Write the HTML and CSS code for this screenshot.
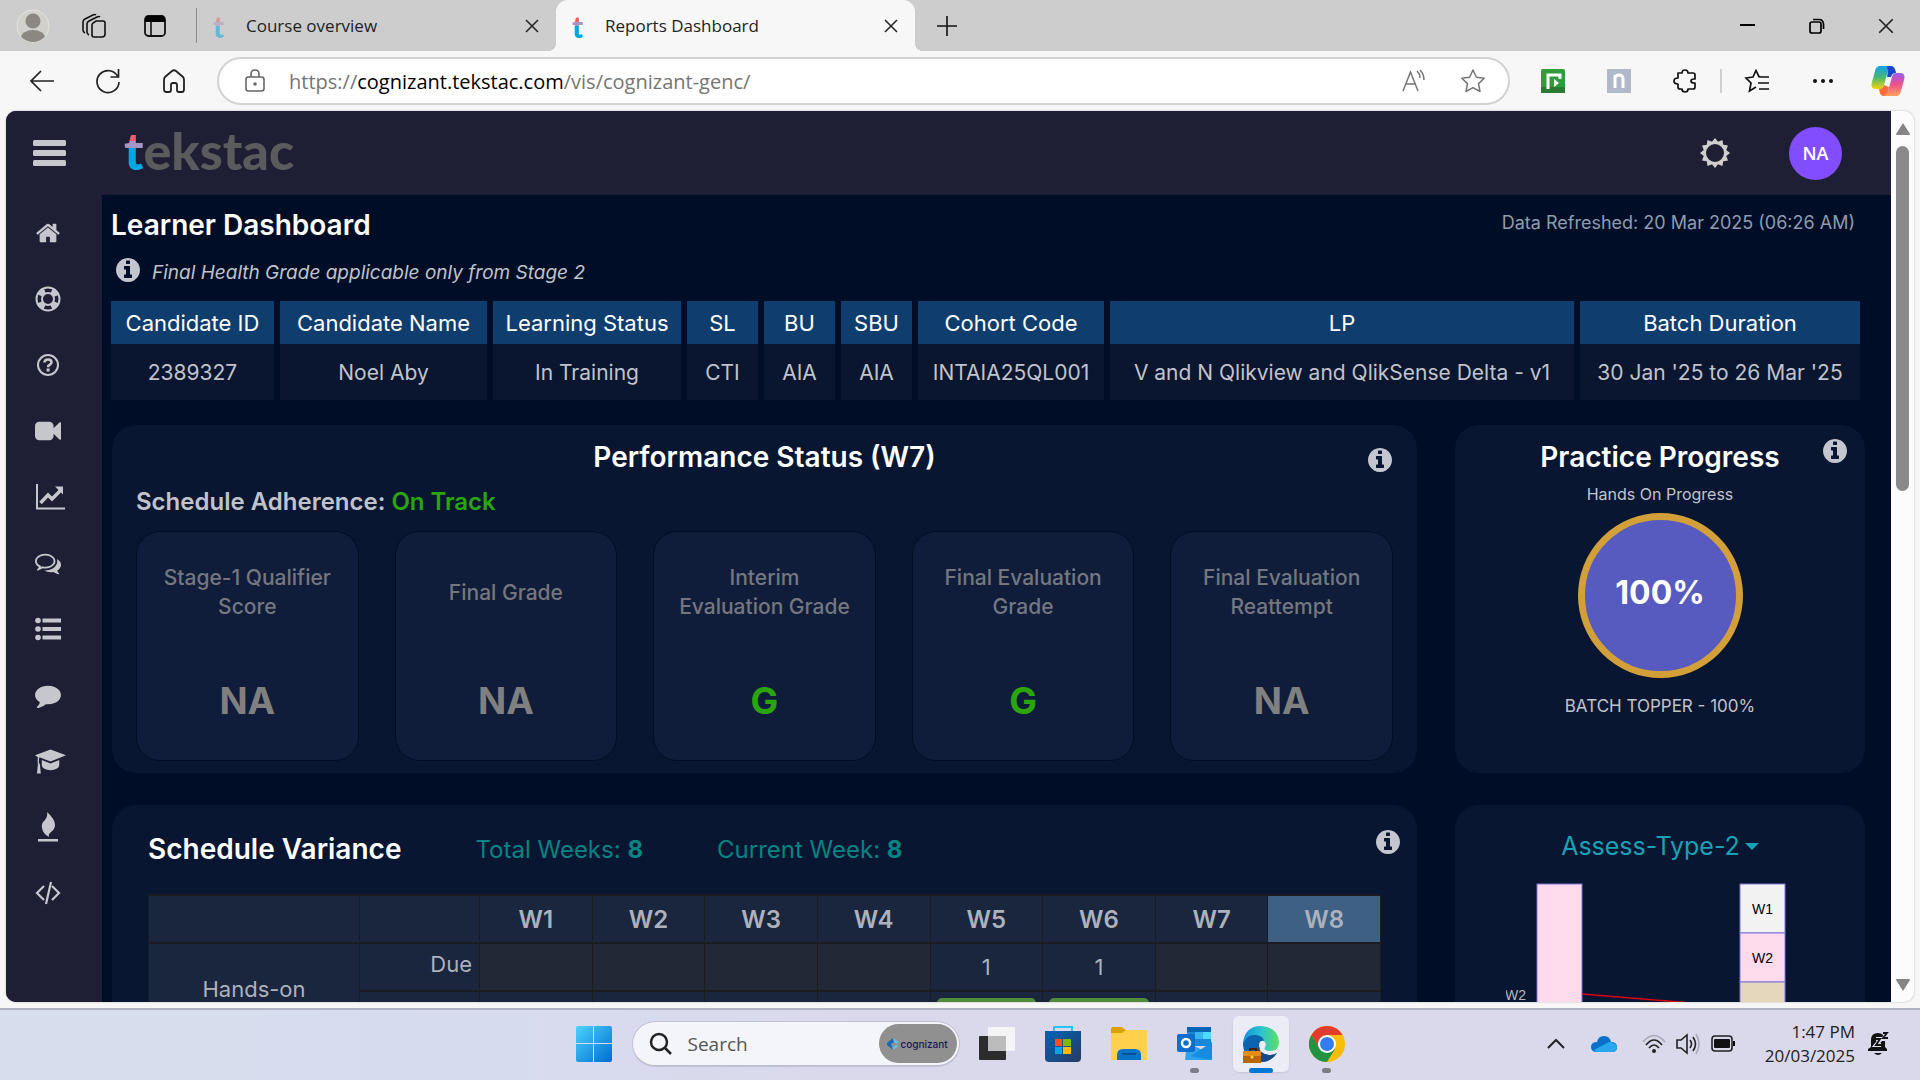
FILE: index.html
```html
<!DOCTYPE html>
<html lang="en">
<head>
<meta charset="utf-8">
<title>Reports Dashboard</title>
<link rel="stylesheet" href="styles.css">
</head>
<body>
<svg class="sprite" aria-hidden="true">
  <symbol id="close" viewBox="0 0 16 16"><path d="M2 2l12 12M14 2L2 14" fill="none" stroke="currentColor" stroke-width="1.5"/></symbol>
  <symbol id="info" viewBox="128 128 1536 1536"><path d="M1152 1376v-160q0-14-9-23t-23-9h-96v-512q0-14-9-23t-23-9h-320q-14 0-23 9t-9 23v160q0 14 9 23t23 9h96v320h-96q-14 0-23 9t-9 23v160q0 14 9 23t23 9h448q14 0 23-9t9-23zm-128-896v-160q0-14-9-23t-23-9h-192q-14 0-23 9t-9 23v160q0 14 9 23t23 9h192q14 0 23-9t9-23zm640 416q0 209-103 385.5t-279.5 279.5-385.5 103-385.5-103-279.5-279.5-103-385.5 103-385.5 279.5-279.5 385.5-103 385.5 103 279.5 279.5 103 385.5z" fill="currentColor"/></symbol>
</svg>

<header class="tabstrip">
  <div class="strip-tools">
    <button class="icon-btn" aria-label="Profile"><svg width="34" height="34" viewBox="0 0 34 34"><defs><clipPath id="av"><circle cx="17" cy="17" r="16"/></clipPath></defs><circle cx="17" cy="17" r="16" fill="#d2d0cb" stroke="#e6e4de"/><g clip-path="url(#av)" fill="#8b8883"><circle cx="17" cy="12" r="7.500"/><ellipse cx="17" cy="29" rx="12" ry="8"/></g></svg></button>
    <button class="icon-btn" aria-label="Workspaces"><svg width="26" height="26" viewBox="0 0 26 26" fill="none" stroke="#111" stroke-width="1.600"><path d="M4 20q-2-1-2-3V9q0-2 2-3l8-4q2-1 3 0M8 22q-2-1-2-3v-8q0-2 2-3l8-4q2-1 3 0"/><path d="M11 12q0-1 1-2l3-2h7q2 0 2 2v11q0 3-3 3h-8q-2 0-2-2z"/></svg></button>
    <button class="icon-btn" aria-label="Tab actions"><svg width="24" height="24" viewBox="0 0 24 24"><rect x="2" y="2" width="20" height="20" rx="3.500" fill="none" stroke="#111" stroke-width="1.800"/><path d="M2 8V5q0-3 3-3h14q3 0 3 3v3z" fill="#000"/><path d="M8 8v14" stroke="#111" stroke-width="1.600"/></svg></button>
  </div>
  <div class="tab">
    <span class="favicon faded">t</span><span class="tab-title">Course overview</span>
    <button class="icon-btn" aria-label="Close Course overview"><svg width="16" height="16"><use href="#close"/></svg></button>
  </div>
  <div class="tab active">
    <span class="favicon">t</span><span class="tab-title">Reports Dashboard</span>
    <button class="icon-btn" aria-label="Close Reports Dashboard"><svg width="16" height="16"><use href="#close"/></svg></button>
  </div>
  <button class="icon-btn new-tab" aria-label="New tab"><svg width="22" height="22" viewBox="0 0 22 22"><path d="M11 1v20M1 11h20" stroke="#111" stroke-width="1.600"/></svg></button>
  <div class="window-tools">
    <button class="icon-btn" aria-label="Minimize"><svg width="16" height="16"><path d="M0 7h15" stroke="#000" stroke-width="2"/></svg></button>
    <button class="icon-btn" aria-label="Restore"><svg width="16" height="16" viewBox="0 0 16 16" fill="none" stroke="#000" stroke-width="1.700"><rect x="1" y="4" width="11" height="11" rx="2"/><path d="M4 1.500h6q4 0 4.500 4.500v5"/></svg></button>
    <button class="icon-btn" aria-label="Close window"><svg width="18" height="18"><use href="#close"/></svg></button>
  </div>
</header>

<div class="toolbar">
  <div class="nav-tools">
    <button class="icon-btn" aria-label="Back"><svg width="26" height="24" viewBox="0 0 26 24" fill="none" stroke="#222" stroke-width="1.700"><path d="M25 12H2M12 2L2 12l10 10"/></svg></button>
    <button class="icon-btn" aria-label="Refresh"><svg width="26" height="26" viewBox="0 0 26 26" fill="none" stroke="#222" stroke-width="1.700"><path d="M23 9A11 11 0 1 0 24 14M23.500 1v8h-8"/></svg></button>
    <button class="icon-btn" aria-label="Home"><svg width="24" height="24" viewBox="0 0 24 24" fill="none" stroke="#222" stroke-width="1.800"><path d="M2 11q0-2 1-3l7-6q2-1.500 4 0l7 6q1 1 1 3v9q0 3-2 3h-3q-2 0-2-2v-5q0-2-2-2h-2q-2 0-2 2v5q0 2-2 2H4q-2 0-2-3z"/></svg></button>
  </div>
  <form class="address">
    <svg width="20" height="24" viewBox="0 0 20 24" fill="none" stroke="#666" stroke-width="1.600"><rect x="1" y="8" width="18" height="14" rx="2.500"/><path d="M6 8V5q0-4 4-4t4 4v3"/><circle cx="10" cy="15" r="1" fill="#666"/></svg>
    <div class="url"><span>https://</span><b>cognizant.tekstac.com</b><span>/vis/cognizant-genc/</span></div>
    <button type="button" class="icon-btn" aria-label="Read aloud"><svg width="24" height="24" viewBox="0 0 24 24" fill="none" stroke="#757575" stroke-width="1.500"><path d="M1 22L8.500 3 16 22M4 15h9M15 2q3 3 3 7M18 1q4 4 4 10"/></svg></button>
    <button type="button" class="icon-btn" aria-label="Add to favorites"><svg width="26" height="26" viewBox="0 0 26 26" fill="none" stroke="#757575" stroke-width="1.500" stroke-linejoin="round"><path d="M13 2l3.400 7.200 7.800 1-5.700 5.400 1.500 7.900L13 19.600 6 23.500l1.500-7.900L1.800 10.200l7.800-1z"/></svg></button>
  </form>
  <div class="extensions">
    <button class="icon-btn" aria-label="Screen recorder"><svg width="24" height="24" viewBox="0 0 24 24"><rect width="24" height="24" rx="2" fill="#349a3e"/><path d="M0 18h24v6H0z" fill="#287b31"/><path d="M7 20V6h12v4" fill="none" stroke="#fff" stroke-width="3"/><path d="M13 10l5 4-5 4z" fill="#fff"/></svg></button>
    <button class="icon-btn" aria-label="Notes"><svg width="24" height="24" viewBox="0 0 24 24"><path fill="#b0b8c9" d="M0 0h24v24H0z"/><path d="M8 19V6M8 9q1-3 4-3 4 0 4 4v9" fill="none" stroke="#fff" stroke-width="3"/></svg></button>
    <button class="icon-btn" aria-label="Extensions"><svg width="24" height="24" viewBox="0 0 24 24" fill="none" stroke="#111" stroke-width="1.700" stroke-linejoin="round"><path d="M5 4h4q0-3 3-3t3 3h5q2 0 2 2v4h-1q-3 0-3 2t3 2h1v4q0 2-2 2h-5q0 3-3 3t-3-3H7q-2 0-2-2v-3q-4 0-4-3t4-3z"/></svg></button>
    <i class="divider"></i>
    <button class="icon-btn" aria-label="Favorites"><svg width="26" height="24" viewBox="0 0 26 24" fill="none" stroke="#111" stroke-width="1.700"><path d="M17 8l-2-.3L12 1.500 9 8l-7 1 5 5-1.500 8L12 18M17 8h8M14 14h11M15 20h10"/></svg></button>
    <button class="icon-btn" aria-label="More"><svg width="22" height="6"><g fill="#111"><circle cx="3" cy="3" r="2"/><circle cx="11" cy="3" r="2"/><circle cx="19" cy="3" r="2"/></g></svg></button>
    <button class="icon-btn copilot" aria-label="Copilot"><svg width="34" height="32" viewBox="0 0 34 32"><defs><linearGradient id="cp1" x2="0" y2="1"><stop stop-color="#13a0ed"/><stop offset=".5" stop-color="#48b970"/><stop offset="1" stop-color="#f5d40a"/></linearGradient><linearGradient id="cp2" x2="0" y2="1"><stop stop-color="#9a59ef"/><stop offset=".5" stop-color="#f0508e"/><stop offset="1" stop-color="#ffa45a"/></linearGradient></defs><path d="M9 1h13q-4 1-5 5l-4 14q-1 4-5 4H5q-6 0-4-7L4 6q1-5 5-5z" fill="url(#cp1)"/><path d="M25 31H12q4-1 5-5l4-14q1-4 5-4h3q6 0 4 7l-3 11q-1 5-5 5z" fill="url(#cp2)"/><path d="M16 1h4q4 0 5 7-4 0-5 4h-4l1-6z" fill="#1748ca"/><path d="M18 22l-1 4q-1 5-5 5-3 0-4-7 4 0 5-4z" fill="#fa6e3d"/></svg></button>
  </div>
</div>

<div class="viewport">
  <div class="app">
    <header class="app-bar">
      <button class="icon-btn menu" aria-label="Menu"><svg width="34" height="28" viewBox="0 0 34 28" fill="#c6c7cc"><rect y="1" width="33" height="6" rx="1.500"/><rect y="11" width="33" height="6" rx="1.500"/><rect y="21" width="33" height="6" rx="1.500"/></svg></button>
      <a href="#" class="logo"><span>t</span>ekstac</a>
      <button class="icon-btn theme" aria-label="Theme"><svg width="32" height="32" viewBox="-16 -16 32 32"><g fill="#d0cfcb"><path d="M0-15l4 5h-8zM0 15l4-5h-8zM-15 0l5-4v8zM15 0l-5-4v8z"/><path d="M0-15l4 5h-8zM0 15l4-5h-8zM-15 0l5-4v8zM15 0l-5-4v8z" transform="rotate(30)"/><path d="M0-15l4 5h-8zM0 15l4-5h-8zM-15 0l5-4v8zM15 0l-5-4v8z" transform="rotate(60)"/></g><circle r="10" fill="#1e1f34" stroke="#d0cfcb" stroke-width="2"/></svg></button>
      <button class="user">NA</button>
    </header>
    <nav class="side">
      <a href="#" aria-label="Home"><svg viewBox="0 0 1792 1792"><path d="M1472 992v480q0 26-19 45t-45 19h-384v-384h-256v384h-384q-26 0-45-19t-19-45v-480q0-1 .5-3t.5-3l575-474 575 474q1 2 1 6zm223-69l-62 74q-8 9-21 11h-3q-13 0-21-7l-692-577-692 577q-12 8-24 7-13-2-21-11l-62-74q-8-10-7-23.500t11-21.500l719-599q32-26 76-26t76 26l244 204v-195q0-14 9-23t23-9h192q14 0 23 9t9 23v408l219 182q10 8 11 21.500t-7 23.500z"/></svg></a>
      <a href="#" aria-label="Support"><svg viewBox="0 0 26 26" fill="none"><circle cx="13" cy="13" r="11.500" fill="none" stroke="currentColor" stroke-width="2"/><circle cx="13" cy="13" r="6" fill="none" stroke="currentColor" stroke-width="2"/><circle cx="13" cy="13" r="9" fill="none" stroke="currentColor" stroke-width="6" stroke-dasharray="7.070 7.070" stroke-dashoffset="-3.500"/></svg></a>
      <a href="#" aria-label="Help"><svg viewBox="0 0 26 26"><circle cx="13" cy="13" r="10" fill="none" stroke="currentColor" stroke-width="2"/><path d="M9.500 10.500q0-3 3.500-3t3.500 2.800q0 1.700-2 2.700-1.500.7-1.500 2.200" fill="none" stroke="currentColor" stroke-width="2.600"/><rect x="11.600" y="16.500" width="3" height="3"/></svg></a>
      <a href="#" aria-label="Videos"><svg viewBox="0 0 1792 1792"><path d="M1792 352v1088q0 42-39 59-13 5-25 5-27 0-45-19l-403-403v166q0 119-84.500 203.500t-203.500 84.500h-704q-119 0-203.500-84.500t-84.500-203.500v-704q0-119 84.500-203.500t203.500-84.500h704q119 0 203.500 84.500t84.500 203.500v165l403-402q18-19 45-19 12 0 25 5 39 17 39 59z"/></svg></a>
      <a href="#" aria-label="Reports"><svg class="wide" viewBox="0 0 29 26"><path d="M1 0v24.500h28" fill="none" stroke="currentColor" stroke-width="2"/><path d="M4.500 19l7.500-8 4 4 8.500-8.500" fill="none" stroke="currentColor" stroke-width="3.400"/><path d="M19 2.500h8v8z"/></svg></a>
      <a href="#" aria-label="Discussions"><svg viewBox="0 0 1792 1792"><path d="M704 384q-153 0-286 52t-211.500 141-78.500 191q0 82 53 158t149 132l97 56-35 84q34-20 62-39l44-31 53 10q78 14 153 14 153 0 286-52t211.500-141 78.500-191-78.500-191-211.500-141-286-52zm0-128q191 0 353.500 68.500t256.500 186.500 94 257-94 257-256.500 186.500-353.500 68.500q-86 0-176-16-124 88-278 128-36 9-86 16h-3q-11 0-20.500-8t-11.500-21q-1-3-1-6.500t.5-6.500 2-6l2.500-5 3.500-5.500 4-5 4.500-5 4-4.500q5-6 23-25t26-29.500 22.500-29 25-38.500 20.500-44q-124-72-195-177t-71-224q0-139 94-257t256.500-186.500 353.500-68.500zm822 1169q10 24 20.500 44t25 38.500 22.500 29 26 29.500 23 25q1 1 4 4.500t4.500 5 4 5 3.500 5.500l2.500 5 2 6 .5 6.500-1 6.500q-3 14-13 22t-22 7q-50-7-86-16-154-40-278-128-90 16-176 16-271 0-472-132 58 4 88 4 161 0 309-45t264-129q125-92 192-212t67-254q0-77-23-152 129 71 204 178t75 230q0 120-71 224.500t-195 176.500z"/></svg></a>
      <a href="#" aria-label="Lists"><svg viewBox="0 0 26 26"><circle cx="3" cy="4.500" r="2.800"/><circle cx="3" cy="13" r="2.800"/><circle cx="3" cy="21.500" r="2.800"/><path d="M7.500 2.500H26v4H7.500zM7.500 11H26v4H7.500zM7.500 19.500H26v4H7.500z"/></svg></a>
      <a href="#" aria-label="Messages"><svg viewBox="0 0 1792 1792"><path d="M1792 896q0 174-120 321.500t-326 233-450 85.500q-70 0-145-8-198 175-460 242-49 14-114 22-17 2-30.500-9t-17.500-29v-1q-3-4-.5-12t2-10 4.500-9.500l6-9 7-8.500 8-9q7-8 31-34.500t34.500-38 31-39.500 32.500-51 27-59 26-76q-157-89-247.500-220t-90.500-281q0-130 71-248.500t191-204.500 286-136.500 348-50.500q244 0 450 85.500t326 233 120 321.500z"/></svg></a>
      <a href="#" aria-label="Courses"><svg class="wide" viewBox="0 0 32 26"><path d="M16 1l16 6-16 6.500L4.500 9.200Q4 11 4 14.500l1 2L6 26H2l1-9.500Q2.500 13 3 9L0 7z"/><path d="M7 12l9 3.600 9-3.600v6q-1 4-9 4.500-8-.5-9-4.500z"/></svg></a>
      <a href="#" aria-label="Campfire"><svg class="tall" viewBox="0 0 26 30"><path d="M12 0q8 7 8 13 0 4-4 7-3 2.500-2 5-6-3-7-9-1-5 3-8 3-4 2-8zM3 27h20v2.500H3z"/></svg></a>
      <a href="#" aria-label="Code"><svg viewBox="0 0 26 24"><path d="M9 5L2 12l7 7M17 5l7 7-7 7M16 1l-5 22" fill="none" stroke="currentColor" stroke-width="2.200"/></svg></a>
    </nav>

    <main class="content">
      <div class="heading"><h1>Learner Dashboard</h1><p>Data Refreshed: 20 Mar 2025 (06:26 AM)</p></div>
      <p class="note"><svg class="info"><use href="#info"/></svg><em>Final Health Grade applicable only from Stage 2</em></p>
      <table class="candidate">
        <colgroup><col class="c-id"><col class="c-name"><col class="c-status"><col class="c-short"><col class="c-short"><col class="c-short"><col class="c-cohort"><col class="c-lp"><col class="c-batch"></colgroup>
        <thead><tr><th>Candidate ID</th><th>Candidate Name</th><th>Learning Status</th><th>SL</th><th>BU</th><th>SBU</th><th>Cohort Code</th><th>LP</th><th>Batch Duration</th></tr></thead>
        <tbody><tr><td>2389327</td><td>Noel Aby</td><td>In Training</td><td>CTI</td><td>AIA</td><td>AIA</td><td>INTAIA25QL001</td><td>V and N Qlikview and QlikSense Delta - v1</td><td>30 Jan '25 to 26 Mar '25</td></tr></tbody>
      </table>

      <div class="cards">
        <section class="card performance">
          <header class="card-head"><h2>Performance Status (W7)</h2><button class="icon-btn" aria-label="About performance"><svg class="info"><use href="#info"/></svg></button></header>
          <h3>Schedule Adherence: <span class="good">On Track</span></h3>
          <div class="tiles">
            <div class="tile"><p>Stage-1 Qualifier Score</p><strong>NA</strong></div>
            <div class="tile"><p>Final Grade</p><strong>NA</strong></div>
            <div class="tile"><p>Interim<br>Evaluation Grade</p><strong class="good">G</strong></div>
            <div class="tile"><p>Final Evaluation Grade</p><strong class="good">G</strong></div>
            <div class="tile"><p>Final Evaluation Reattempt</p><strong>NA</strong></div>
          </div>
        </section>

        <section class="card practice">
          <header class="card-head"><h2>Practice Progress</h2><button class="icon-btn" aria-label="About practice"><svg class="info"><use href="#info"/></svg></button></header>
          <p class="small">Hands On Progress</p>
          <div class="ring">100%</div>
          <p class="topper">BATCH TOPPER - 100%</p>
        </section>

        <section class="card variance">
          <header class="variance-head"><h2>Schedule Variance</h2><span>Total Weeks: <b>8</b></span><span>Current Week: <b>8</b></span><button class="icon-btn" aria-label="About variance"><svg class="info"><use href="#info"/></svg></button></header>
          <table class="weeks">
            <colgroup><col class="w-group"><col class="w-kind"><col span="8"></colgroup>
            <thead><tr><td></td><td></td><th>W1</th><th>W2</th><th>W3</th><th>W4</th><th>W5</th><th>W6</th><th>W7</th><th class="current">W8</th></tr></thead>
            <tbody>
              <tr><th rowspan="2" class="group">Hands-on</th><th class="kind">Due</th><td class="none"></td><td class="none"></td><td class="none"></td><td class="none"></td><td>1</td><td>1</td><td class="none"></td><td class="none"></td></tr>
              <tr><th class="kind"></th><td></td><td></td><td></td><td></td><td><i class="done"></i></td><td><i class="done"></i></td><td></td><td></td></tr>
            </tbody>
          </table>
        </section>

        <section class="card assess">
          <button class="assess-type">Assess-Type-2<i class="caret"></i></button>
          <svg class="chart" width="308" height="160" viewBox="0 0 308 160">
            <rect x="31" y="1" width="45" height="159" fill="#fddbec" stroke="#7d74d8"/>
            <rect x="234" y="1" width="45" height="49" fill="#f2f2f2" stroke="#7d74d8"/>
            <rect x="234" y="50" width="45" height="49" fill="#fddbec" stroke="#7d74d8"/>
            <rect x="234" y="99" width="45" height="61" fill="#e5d7bb" stroke="#7d74d8"/>
            <path d="M76 111l158 13" fill="none" stroke="#dd0010" stroke-width="1.500"/>
            <text x="-1" y="117" fill="#b3b7c0">W2</text>
            <text x="246" y="31">W1</text><text x="246" y="80">W2</text>
          </svg>
        </section>
      </div>
    </main>
  </div>
  <div class="scrollbar" aria-hidden="true">
    <svg width="16" height="14"><path d="M8 1L15 12Q15 13 14 13H2Q1 13 1 12z" fill="#858585"/></svg>
    <div class="track"><div class="thumb"></div></div>
    <svg width="16" height="14"><path d="M8 13L15 2Q15 1 14 1H2Q1 1 1 2z" fill="#858585"/></svg>
  </div>
</div>

<footer class="taskbar">
  <div class="dock">
    <button class="icon-btn start" aria-label="Start"><svg width="36" height="36" viewBox="0 0 36 36"><defs><linearGradient id="win" x2="1" y2="1"><stop stop-color="#4cd2ff"/><stop offset="1" stop-color="#006dce"/></linearGradient></defs><path fill="url(#win)" d="M2 0h15v17H0V2q0-2 2-2zM18 0h16q2 0 2 2v15H18zM0 18h17v18H2q-2 0-2-2zM18 18h18v16q0 2-2 2H18z"/></svg></button>
    <label class="search"><svg width="24" height="24" viewBox="0 0 24 24" fill="none" stroke="#222" stroke-width="2.500"><circle cx="10" cy="10" r="8"/><path d="M16 16l6 6"/></svg><input type="search" placeholder="Search" aria-label="Search"><span class="badge"><svg width="12" height="12" viewBox="0 0 12 12"><path d="M6 0l1 4-3 2 2 6-6-5V5z" fill="#1669b9"/><path d="M6 0l6 4-2 2-3-2zM6 12l6-4-3-1-3 2z" fill="#69bdd8"/></svg>cognizant</span></label>
    <button class="icon-btn app-btn" aria-label="Task view"><svg width="36" height="36" viewBox="0 0 36 36"><rect y="10" width="27" height="24" rx="1" fill="#2c2c2c"/><rect x="9" y="1" width="27" height="24" rx="1" fill="#f4f4f4"/><path d="M9 10h18v15H9z" fill="#bcbcbc"/></svg></button>
    <button class="icon-btn app-btn" aria-label="Store"><svg width="36" height="36" viewBox="0 0 36 36"><defs><linearGradient id="st" x2="1" y2="1"><stop stop-color="#0065b8"/><stop offset="1" stop-color="#283a63"/></linearGradient></defs><path d="M9 7V1h18v6" fill="none" stroke="#27c3f5" stroke-width="2"/><path d="M0 5h36v27q0 4-4 4H4q-4 0-4-4z" fill="url(#st)"/><path d="M10 13h7v7h-7z" fill="#f25022"/><path d="M18 13h8v7h-8z" fill="#7fba00"/><path d="M10 21h7v7h-7z" fill="#00a4ef"/><path d="M18 21h8v7h-8z" fill="#ffb900"/></svg></button>
    <button class="icon-btn app-btn" aria-label="File Explorer"><svg width="36" height="36" viewBox="0 0 36 36"><path d="M0 3q0-2 2-2h8q2 0 3 2l2 1v4H0z" fill="#dca000"/><path d="M0 7h11l4-3h21v30H0z" fill="#ffd04c"/><path d="M6 34v-5q0-6 6-6h12q6 0 6 6v5z" fill="#0873c8"/><path d="M11 28h14" stroke="#064f91" stroke-width="2"/></svg></button>
    <button class="icon-btn app-btn open" aria-label="Outlook"><svg width="36" height="36" viewBox="0 0 36 36"><path d="M10 5q0-4 3-4h21v19H10z" fill="#1a86d9"/><path d="M10 1h24v5H10z" fill="#0566b3"/><path d="M26 6h8v7h-8z" fill="#50d9ff"/><path d="M18 6h8v7h-8z" fill="#38b4ef"/><path d="M10 17l16 7 9-8v18H8z" fill="#2ba3ed"/><path d="M35 16L14 30l21 4z" fill="#178be0"/><rect y="8" width="18" height="18" rx="2" fill="#0c6fcb"/><circle cx="9" cy="17" r="4" fill="none" stroke="#fff" stroke-width="2.500"/></svg></button>
    <button class="icon-btn app-btn open current-app" aria-label="Edge"><svg width="38" height="38" viewBox="0 0 38 38"><defs><linearGradient id="eg"><stop stop-color="#138fd9"/><stop offset=".5" stop-color="#2bc3d1"/><stop offset="1" stop-color="#5be163"/></linearGradient></defs><path d="M1 18Q3 1 19 1q17 1 18 16 0 9-9 9-7 0-5-4 2-3-1-6-4-5-12-2-6 2-9 8z" fill="url(#eg)"/><path d="M1 19q4-10 13-9 7 1 8 6-5-1-5 5 0 8 10 9 5 0 8-2-6 9-16 9Q2 37 1 19z" fill="#0c64ae"/><path d="M17 21q0 8 10 9 5 0 8-2-4 7-14 9-9-5-4-16z" fill="#144a8b"/><path d="M8 26v-2h6v2" fill="none" stroke="#432000" stroke-width="2"/><path d="M1 26h18v12H1z" fill="#b96500"/><path d="M1 26h18v5H1z" fill="#e58a13"/><circle cx="10" cy="32" r="1.500" fill="#ffdc52"/></svg></button>
    <button class="icon-btn app-btn open" aria-label="Chrome"><svg width="36" height="36" viewBox="0 0 36 36"><circle cx="18" cy="18" r="18" fill="#fbbc05"/><path d="M18 9h15.600A18 18 0 0 0 2.400 9L10 22z" fill="#e33b2e"/><path d="M2.400 9A18 18 0 0 0 18 36l8-13H11z" fill="#229342"/><circle cx="18" cy="18" r="9" fill="#fff"/><circle cx="18" cy="18" r="7" fill="#327cf0"/></svg></button>
  </div>
  <div class="tray">
    <button class="icon-btn" aria-label="Hidden icons"><svg width="18" height="12"><path d="M1 10l8-8 8 8" fill="none" stroke="#222" stroke-width="2"/></svg></button>
    <button class="icon-btn cloud" aria-label="OneDrive"><svg width="26" height="18" viewBox="0 0 26 18"><path d="M6 17q-6 0-6-5 0-5 6-5 1-6 7-6 6 0 7 6 6 0 6 5t-5 5z" fill="#0b70c9"/><path d="M3 15L16 8q3-2 6 0 4 1 4 5 0 4-5 4H6q-2 0-3-2z" fill="#28a7ef"/></svg></button>
    <button class="icon-btn status" aria-label="Network, sound and battery">
      <svg width="26" height="22" viewBox="0 0 26 22" fill="none" stroke="#222" stroke-width="1.700"><path d="M2 9q11-13 22 0" stroke="#aaa9b7"/><path d="M5 12q8-10 16 0M8 15q5-6 10 0"/><circle cx="13" cy="18" r="2" fill="#222" stroke="none"/></svg>
      <svg width="26" height="24" viewBox="0 0 26 24" fill="none" stroke="#222" stroke-width="1.600"><path d="M1 8h4l6-5v18l-6-5H1zM14 8q3 4 0 8M17 5q5 7 0 14"/><path d="M20 2q6 10 0 20" stroke="#aaa9b7"/></svg>
      <svg width="26" height="20" viewBox="0 0 26 20"><rect x="1" y="2" width="20" height="15" rx="3" fill="none" stroke="#222" stroke-width="1.600"/><rect x="3" y="5" width="16" height="9" rx="1" fill="#111"/><path d="M22 7h2v5h-2z"/></svg>
    </button>
    <time>1:47 PM<br>20/03/2025</time>
    <button class="icon-btn" aria-label="Notifications"><svg width="22" height="26" viewBox="0 0 22 26"><path d="M3 16V9q0-7 7-7 6 0 7 7v7l2 2v2H0v-2zM6 22h8q-4 4-8 0z" fill="#111"/><path d="M8 8h5l-5 6h5M15 2h5l-5 6h5" fill="none" stroke="#dad9eb" stroke-width="4"/><path d="M15 2h4l-4 5h5" fill="none" stroke="#111" stroke-width="1.800"/><path d="M8 8h4l-4 6h5" fill="none" stroke="#111" stroke-width="1.800"/></svg></button>
  </div>
</footer>
</body>
</html>
```
FILE: styles.css
```css
* { box-sizing: border-box; }
html, body { height: 100%; }
body {
  margin: 0;
  display: flex;
  flex-direction: column;
  overflow: hidden;
  background: #f7f7f7;
  color: #222;
  font-family: "Open Sans", "Noto Sans", sans-serif;
}
h1, h2, h3, p { margin: 0; }
button, input { font: inherit; color: inherit; border: 0; background: none; padding: 0; }
svg { display: block; flex: none; }
.sprite { position: absolute; width: 0; height: 0; }
.icon-btn { display: flex; align-items: center; justify-content: center; flex: none; }

/* Tab strip */
.tabstrip { display: flex; height: 51px; flex: none; background: #cdcdcd; }
.strip-tools { display: flex; align-items: center; width: 197px; margin: 8px 0; border-right: 1px solid #8b8b8b; padding-left: 2px; }
.strip-tools .icon-btn { width: 61px; }
.tab { display: flex; align-items: center; width: 359px; padding: 0 14px 0 15px; font-size: 17px; }
.tab .icon-btn { width: 20px; }
.tab.active { position: relative; background: #f7f7f7; border-radius: 12px 12px 0 0; }
.tab.active::before, .tab.active::after { content: ""; position: absolute; bottom: 0; width: 8px; height: 8px; }
.tab.active::before { right: 100%; background: radial-gradient(circle at 0 0, transparent 8px, #f7f7f7 8px); }
.tab.active::after { left: 100%; background: radial-gradient(circle at 100% 0, transparent 8px, #f7f7f7 8px); }
.tab-title { flex: 1; }
.favicon { width: 34px; padding-left: 1px; font: 900 30px/30px Lato, sans-serif; color: transparent; background: linear-gradient(#f15a66 11px, #a795c7 11px 15px, #00a7e1 15px); background-clip: text; }
.favicon.faded { opacity: .5; }
.new-tab { width: 64px; }
.window-tools { display: flex; margin-left: auto; }
.window-tools .icon-btn { width: 69px; }

/* Toolbar */
.toolbar { display: flex; align-items: center; height: 60px; flex: none; padding: 0 0 0 9px; }
.nav-tools { display: flex; width: 208px; }
.nav-tools .icon-btn { width: 66px; }
.address { display: flex; align-items: center; flex: 1; height: 48px; padding: 0 6px 0 26px; border: 2px solid #d2d2d2; border-radius: 24px; background: #fff; }
.address .icon-btn { width: 59px; }
.url { flex: 1; padding-left: 24px; font-size: 20px; color: #757575; }
.url b { font-weight: 400; color: #000; }
.extensions { display: flex; align-items: center; padding-left: 10px; }
.extensions .icon-btn { width: 66px; }
.extensions .divider { width: 2px; height: 24px; margin: 0 2px; background: #cfcfcf; }
.extensions .copilot { width: 64px; }

/* Page frame */
.viewport { display: flex; flex: 1; min-height: 0; margin: 0 6px 6px; border-radius: 10px; overflow: hidden; background: #fcfcfc; box-shadow: 0 0 2px #aaa; }
.app {
  flex: 1;
  min-width: 0;
  display: grid;
  grid-template: 84px 1fr / 96px minmax(0, 1fr);
  overflow: hidden;
  background: #000d26;
  color: #c0c3cb;
  font-family: Inter, "Open Sans", sans-serif;
}
.app-bar { grid-column: 1 / -1; display: flex; align-items: center; padding: 0 49px 0 27px; background: #1e1f34; }
.logo { margin: 0 auto 6px 57px; color: #5a5b5d; font: 900 52px/60px Lato, sans-serif; text-decoration: none; }
.logo span { color: transparent; background: linear-gradient(#f15a66 22px, #a795c7 22px 29px, #00a7e1 29px); background-clip: text; }
.user { width: 53px; height: 53px; margin-left: 58px; border-radius: 50%; background: #824dff; color: #fff; font: 600 18px "Open Sans", sans-serif; }
.side { display: flex; flex-direction: column; background: #1e1f34; padding-top: 5px; }
.side a { display: flex; align-items: center; height: 66px; flex: none; padding-left: 29px; color: #c6c7cc; }
.side svg { width: 26px; height: 26px; fill: currentColor; }
.side svg.wide { width: 31px; }
.side svg.tall { height: 30px; }

.content { padding: 11px 26px 0 9px; overflow: hidden; }
.heading { display: flex; justify-content: space-between; padding-right: 10px; line-height: 38px; }
h1, h2 { color: #fff; font-size: 28px; font-weight: 600; line-height: 38px; }
.heading p { font-size: 18px; line-height: 34px; color: #8f9bb0; }
.note { display: flex; align-items: center; gap: 12px; height: 57px; padding-left: 5px; font-size: 19px; }
.info { width: 24px; height: 24px; color: #c3c6ce; }
.note .info { margin-bottom: 6px; }

.candidate { width: calc(100% + 7px); margin-left: -6px; border-spacing: 6px 0; table-layout: fixed; text-align: center; white-space: nowrap; font-size: 21px; }
.candidate th { height: 43px; padding: 0; background: #0f3d6e; color: #fff; font-size: 22px; font-weight: 400; }
.candidate td { height: 56px; padding: 0; background: #0a162f; }
.c-id { width: 163px; }
.c-name { width: 207px; }
.c-status { width: 188px; }
.c-short { width: 71px; }
.c-cohort { width: 186px; }
.c-batch { width: 280px; }

.cards { display: grid; grid-template-columns: minmax(0, 1305fr) minmax(0, 410fr); gap: 32px 38px; margin: 25px 0 0 1px; }
.card { position: relative; border-radius: 24px; background: #091631; }
.card-head { text-align: center; }
.card-head .icon-btn { position: absolute; top: 23px; right: 25px; }
.practice .card-head .icon-btn { top: 14px; right: 18px; }
.performance { padding: 13px 24px 12px; }
h3 { margin: 7px 0 11px; font-size: 24px; line-height: 37px; font-weight: 600; }
.good, .tile .good { color: #2aa60c; }
.tiles { display: grid; grid-template-columns: repeat(5, 1fr); gap: 36px; }
.tile { display: flex; flex-direction: column; align-items: center; height: 230px; padding: 30px 20px; border: 1px solid #020c24; border-radius: 24px; background: #101d3a; text-align: center; }
.tile p { display: flex; align-items: center; height: 60px; font-size: 21px; line-height: 29px; font-weight: 500; color: #74777f; }
.tile strong { margin-top: 55px; font-size: 37px; line-height: 48px; color: #808080; }
.practice { display: flex; flex-direction: column; align-items: center; padding-top: 13px; }
.small { margin: 6px 0; font-size: 16px; line-height: 25px; }
.ring { display: flex; align-items: center; justify-content: center; width: 165px; height: 165px; padding-bottom: 6px; border: 7px solid #d29f38; border-radius: 50%; background: #575bbf; color: #fff; font-size: 32px; font-weight: 700; }
.topper { margin-top: 15px; font-size: 17px; line-height: 26px; }

.variance { padding: 25px 36px 0 36px; }
.variance-head { display: flex; align-items: center; gap: 74px; height: 38px; margin-bottom: 26px; color: #068484; font-size: 24px; }
.variance-head .icon-btn { position: absolute; top: 25px; right: 17px; }
.weeks { width: 100%; border-collapse: collapse; table-layout: fixed; text-align: center; font-size: 22px; color: #adb1bb; }
.weeks th, .weeks td { height: 48px; padding: 0; border: 2px solid #1c1c20; border-width: 2px 1px; background: #1a253e; font-weight: 400; }
.weeks thead th { font-size: 24px; font-weight: 600; }
.weeks thead .current { background: #3e6084; }
.weeks .none { background: #222836; }
.weeks .kind { padding: 0 7px 6px 0; text-align: right; }
.weeks .group { padding-bottom: 6px; }
.weeks td:has(.done) { padding: 6px 6px; }
.done { display: block; height: 36px; border-radius: 5px; background: #4e8c3c; }
.w-group { width: 211px; }
.w-kind { width: 120px; }

.assess { display: flex; flex-direction: column; align-items: center; padding-top: 22px; }
.assess-type { display: flex; align-items: center; gap: 5px; height: 38px; color: #17a2b8; font-size: 25px; }
.caret { border: 7px solid transparent; border-top-color: currentColor; border-bottom: 0; }
.chart { margin: 18px 0 0; font: 14px "Liberation Sans", sans-serif; }

.scrollbar { display: flex; flex-direction: column; align-items: center; width: 23px; flex: none; padding: 11px 0 10px; }
.track { flex: 1; width: 13px; padding: 10px 0; }
.thumb { height: 42%; border-radius: 7px; background: #8a8a8a; }

/* Taskbar */
.taskbar { display: grid; grid-template-columns: 1fr auto 1fr; height: 72px; flex: none; border-top: 2px solid #b0b3c3; background: linear-gradient(90deg, #d6deed, #d6dcee 25%, #dad9eb 45%, #dad9eb); }
.dock { grid-column: 2; display: flex; align-items: center; padding: 0 0 2px 15px; }
.start { width: 36px; margin-right: 20px; }
.search { display: flex; align-items: center; width: 328px; height: 46px; margin-right: 4px; padding: 0 2px 0 16px; border: 1px solid #bfc0d3; border-bottom-width: 2px; border-radius: 23px; background: #f4f4fb; }
.search input { flex: 1; min-width: 0; margin-left: 15px; font-size: 19px; }
.search input::placeholder { color: #555; opacity: 1; }
.badge { display: flex; align-items: center; justify-content: center; gap: 1px; width: 78px; height: 39px; border-radius: 20px; background: #909090; color: #15185b; font: 500 10px Inter, sans-serif; }
.app-btn { position: relative; width: 56px; height: 56px; margin: 0 5px; border-radius: 6px; }
.current-app { background: #ececf6; box-shadow: 0 1px 2px #c5c5d5; }
.open::after { content: ""; position: absolute; bottom: -1px; width: 9px; height: 5px; border-radius: 3px; background: #7d7c87; }
.current-app::after { width: 24px; background: #0078d4; }
.tray { display: flex; align-items: center; justify-content: flex-end; padding: 0 30px 2px 0; }
.tray .cloud { margin: 0 24px 0 26px; }
.status { gap: 9px; }
.tray time { margin: 0 13px 0 28px; font-size: 17px; line-height: 24px; text-align: right; color: #222; }
```
